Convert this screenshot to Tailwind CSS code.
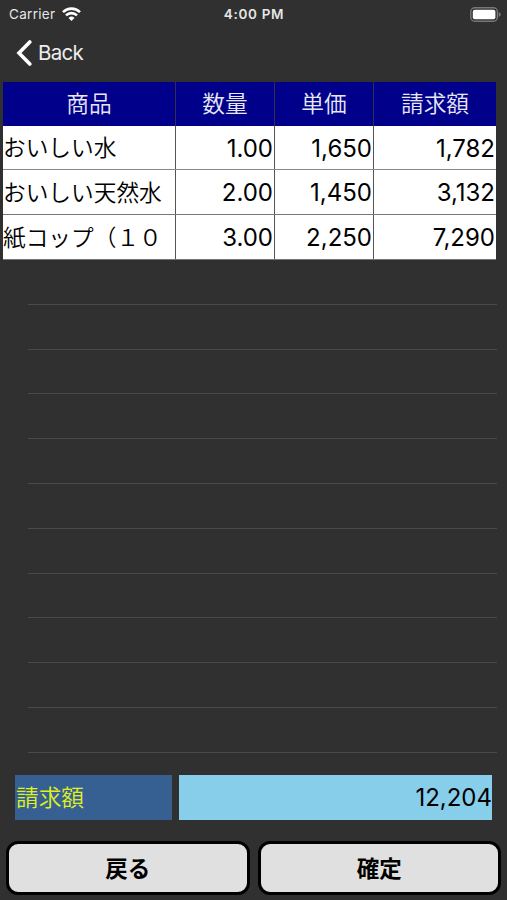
<!DOCTYPE html>
<html lang="ja">
<head>
    <meta charset="UTF-8">
    <meta name="viewport" content="width=device-width, initial-scale=1.0">
    <title>請求額</title>
    <script src="https://cdn.jsdelivr.net/npm/@tailwindcss/browser@4"></script>
</head>
<body class="bg-[#303030] h-[900px] overflow-hidden font-['Inter','Noto_Sans_CJK_JP',sans-serif]">
    <div class="h-full flex flex-col">
        <!-- Status bar -->
        <div class="h-7 pl-[9px] pr-[6px] grid grid-cols-3 items-center text-[13.5px] text-[#e6e6e6]">
            <div class="flex items-center gap-[6px]">
                <span class="w-[47px] whitespace-nowrap tracking-[0.3px]">Carrier</span>
                <svg width="19" height="14" viewBox="0 0 19 14" fill="none" stroke="white" stroke-width="2.6">
                    <path d="M1 5.1a12.2 12.2 0 0 1 17 0" />
                    <path d="M4 8.4a7.8 7.8 0 0 1 11 0" />
                    <path d="M6.5 11a4.3 4.3 0 0 1 6 0L9.5 14z" fill="white" stroke="none" />
                </svg>
            </div>
            <div class="text-center font-semibold tracking-[0.7px] pr-[2px]">4:00 PM</div>
            <div class="flex justify-end">
                <svg width="31" height="15" viewBox="0 0 31 15">
                    <rect x="0.8" y="0.8" width="26.6" height="13.4" rx="4" fill="none" stroke="#777" stroke-width="1.4" />
                    <rect x="2.8" y="2.8" width="22.6" height="9.4" rx="2" fill="white" />
                    <path d="M28.7 5v5q2-.8 2-2.5t-2-2.5z" fill="#777" />
                </svg>
            </div>
        </div>

        <!-- Navigation -->
        <div class="h-[53.7px] pl-4 pb-[3px] flex items-center gap-[5px] text-[20.5px] tracking-[-0.7px] text-[#ededed]">
            <svg width="17" height="26" viewBox="0 0 17 26" fill="none" stroke="white" stroke-width="3.6" stroke-linecap="round">
                <path d="M13.8 2L3 13l10.8 11" />
            </svg>
            <span>Back</span>
        </div>

        <!-- Items -->
        <div class="pl-[3px] text-[22.7px] leading-none text-black">
            <div class="w-[493px] h-11 grid grid-cols-[172px_98px_98px_122px] gap-x-px bg-[#303048] text-[#e8e8f4] font-[350] *:bg-[#00008b] *:flex *:items-center *:justify-center *:pt-[2px]">
                <div>商品</div>
                <div>数量</div>
                <div>単価</div>
                <div>請求額</div>
            </div>
            <div class="w-[493px] h-[44.8px] grid grid-cols-[172px_98px_98px_122px] gap-x-px border-b border-[#888] bg-[#555] *:bg-white *:flex *:items-center *:overflow-hidden *:whitespace-nowrap *:pt-[2px]">
                <div class="font-[350]">おいしい水</div>
                <div class="justify-end pr-px text-2xl leading-none">1.00</div>
                <div class="justify-end pr-px text-2xl leading-none">1,650</div>
                <div class="justify-end pr-px text-2xl leading-none">1,782</div>
            </div>
            <div class="w-[493px] h-[44.8px] grid grid-cols-[172px_98px_98px_122px] gap-x-px border-b border-[#777] bg-[#555] *:bg-white *:flex *:items-center *:overflow-hidden *:whitespace-nowrap *:pt-[2px]">
                <div class="font-[350]">おいしい天然水</div>
                <div class="justify-end pr-px text-2xl leading-none">2.00</div>
                <div class="justify-end pr-px text-2xl leading-none">1,450</div>
                <div class="justify-end pr-px text-2xl leading-none">3,132</div>
            </div>
            <div class="w-[493px] h-[44.8px] grid grid-cols-[172px_98px_98px_122px] gap-x-px border-b border-[#777] bg-[#555] *:bg-white *:flex *:items-center *:overflow-hidden *:whitespace-nowrap *:pt-[2px]">
                <div class="font-[350]">紙コップ（１０</div>
                <div class="justify-end pr-px text-2xl leading-none">3.00</div>
                <div class="justify-end pr-px text-2xl leading-none">2,250</div>
                <div class="justify-end pr-px text-2xl leading-none">7,290</div>
            </div>
        </div>

        <!-- Empty rows -->
        <div class="ml-7 mr-[10px] *:h-[44.8px] *:border-b *:border-[#4a4a4a]">
            <div></div>
            <div></div>
            <div></div>
            <div></div>
            <div></div>
            <div></div>
            <div></div>
            <div></div>
            <div></div>
            <div></div>
            <div></div>
        </div>

        <!-- Total -->
        <div class="mt-[22.3px] ml-[15px] mr-[15px] h-[44.4px] shrink-0 flex gap-[7px] text-[22.7px] leading-none *:pt-[2px]">
            <div class="w-[157px] pl-px bg-[#366092] text-[#e0f020] font-[350] flex items-center">請求額</div>
            <div class="flex-1 bg-[#87ceeb] text-black text-2xl leading-none flex items-center justify-end">12,204</div>
        </div>

        <!-- Buttons -->
        <div class="mt-[21.8px] mx-[6px] flex gap-2 text-[22.5px] font-bold text-black">
            <button class="flex-1 h-[54px] pt-[2px] rounded-[12px] border-[3px] border-black bg-[#e0e0e0] leading-none">戻る</button>
            <button class="flex-1 h-[54px] pt-[2px] rounded-[12px] border-[3px] border-black bg-[#e0e0e0] leading-none">確定</button>
        </div>
    </div>
</body>
</html>
